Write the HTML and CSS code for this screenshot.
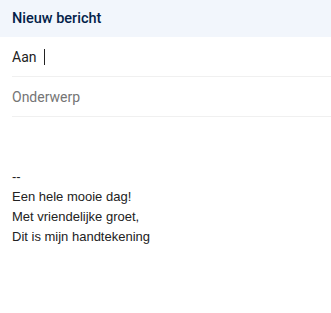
FILE: index.html
```html
<!DOCTYPE html>
<html lang="nl">
<head>
<meta charset="utf-8">
<link rel="stylesheet" href="styles.css">
</head>
<body>
<div class="compose">
  <div class="header">Nieuw bericht</div>
  <div class="field"><span class="label">Aan</span><span class="cursor"></span></div>
  <div class="field"><span class="placeholder">Onderwerp</span></div>
  <div class="body">
    <div><br></div>
    <div><br></div>
    <div>--</div>
    <div>Een hele mooie dag!</div>
    <div>Met vriendelijke groet,</div>
    <div>Dit is mijn handtekening</div>
  </div>
</div>
</body>
</html>
```
FILE: styles.css
```css
html, body { margin: 0; padding: 0; background: #fff; }
.compose { width: 331px; height: 313px; overflow: hidden; }
.header {
  height: 37px;
  background: #f2f6fc;
  color: #041e49;
  font-family: Roboto, "Noto Sans", sans-serif;
  font-weight: 500;
  font-size: 14.5px;
  display: flex;
  align-items: center;
  padding-left: 12px;
}
.field {
  margin-left: 12px;
  height: 39px;
  border-bottom: 1px solid #f0f0f0;
  display: flex;
  align-items: center;
  font-family: Roboto, "Noto Sans", sans-serif;
  font-size: 14px;
}
.label { color: #222; }
.cursor {
  display: inline-block;
  width: 1px;
  height: 16px;
  background: #222;
  margin-left: 8px;
}
.placeholder { color: #757575; }
.body {
  padding: 10px 12px 0;
  font-family: "Liberation Sans", Arial, sans-serif;
  font-size: 13px;
  line-height: 20px;
  color: #222;
}
```
